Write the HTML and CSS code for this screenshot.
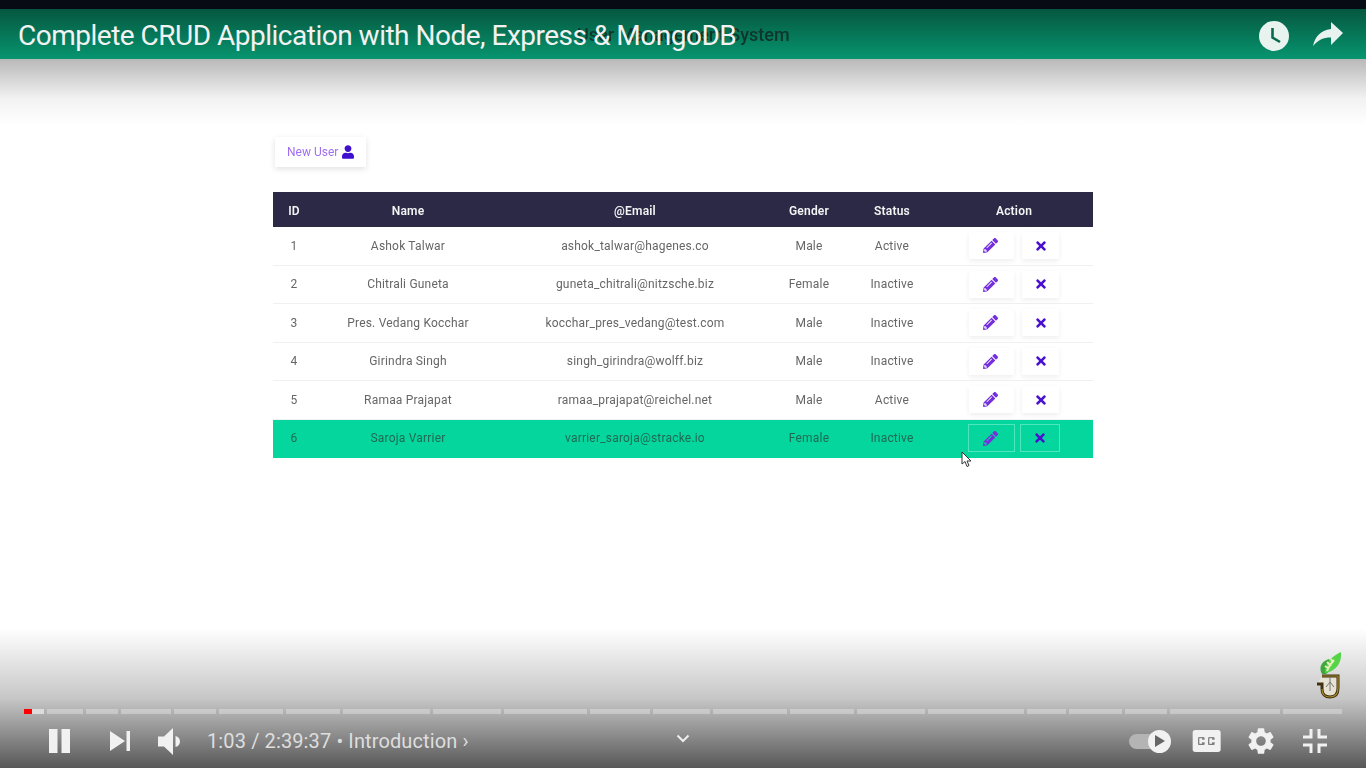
FILE: index.html
```html
<!DOCTYPE html>
<html lang="en">

<head>
  <meta charset="UTF-8">
  <meta name="viewport" content="width=device-width, initial-scale=1.0">
  <title>Complete CRUD Application with Node, Express & MongoDB</title>
  <link rel="stylesheet" href="styles.css">
</head>

<body>
  <svg class="sprites" width="0" height="0">
    <symbol id="pencil" viewBox="0 0 512 512">
      <path fill-rule="evenodd" d="M497.9 142.1l-46.1 46.1c-4.7 4.7-12.3 4.7-17 0l-111-111c-4.7-4.7-4.7-12.3 0-17l46.1-46.1c18.7-18.7 49.1-18.7 67.9 0l60.1 60.1c18.8 18.7 18.800 49.1 0 67.9zM284.2 99.8L21.6 362.4.4 483.9c-2.9 16.4 11.4 30.6 27.8 27.8l121.5-21.3 262.6-262.6c4.7-4.7 4.7-12.3 0-17l-111-111c-4.8-4.7-12.4-4.7-17.1 0zM124.1 339.9c-5.5-5.5-5.5-14.3 0-19.8l154-154c5.5-5.5 14.3-5.5 19.8 0s5.5 14.3 0 19.8l-154 154c-5.5 5.5-14.3 5.5-19.8 0zM88 424h48v36.3l-64.5 11.3-31.1-31.1L51.7 376H88v48z" />
    </symbol>
    <symbol id="times" viewBox="0 0 352 512">
      <path d="M242.72 256l100.07-100.07c12.28-12.28 12.28-32.19 0-44.48l-22.24-22.24c-12.28-12.28-32.19-12.28-44.48 0L176 189.28 75.93 89.21c-12.28-12.28-32.19-12.28-44.48 0L9.21 111.45c-12.28 12.28-12.28 32.19 0 44.48L109.28 256 9.21 356.07c-12.28 12.28-12.28 32.19 0 44.48l22.24 22.24c12.28 12.28 32.2 12.28 44.48 0L176 322.72l100.07 100.07c12.28 12.28 32.2 12.28 44.48 0l22.24-22.24c12.28-12.28 12.28-32.19 0-44.48L242.72 256z" />
    </symbol>
  </svg>

  <div class="player">
    <div class="top-strip"></div>

    <header class="title-bar">
      <span class="app-name">User Management System</span>
      <h1 class="video-title">Complete CRUD Application with Node, Express &amp; MongoDB</h1>
      <svg class="clock-icon" width="32" height="32" viewBox="0 0 32 32">
        <circle cx="16" cy="16" r="15" fill="#e8f3f0" />
        <path d="M14.5 8v9.5l7.5 4.5" fill="none" stroke="#0a6a50" stroke-width="2.6" />
      </svg>
      <svg class="share-icon" width="32" height="26" viewBox="0 0 32 26">
        <path d="M31 12L19 1v7C8 9.500 3 16 1 25c5-6 10-8.500 18-8.500V24z" fill="#e8f3f0" />
      </svg>
    </header>

    <main class="content">
      <a class="new-user">New User
        <svg width="12" height="14" viewBox="0 0 448 512">
          <path fill="#3f0fd0" d="M224 256c70.7 0 128-57.3 128-128S294.7 0 224 0 96 57.3 96 128s57.3 128 128 128zm89.6 32h-16.7c-22.2 10.2-46.9 16-72.9 16s-50.6-5.8-72.9-16h-16.7C60.2 288 0 348.2 0 422.4V464c0 26.5 21.5 48 48 48h352c26.500 0 48-21.5 48-48v-41.6c0-74.2-60.2-134.4-134.4-134.4z" />
        </svg>
      </a>

      <table class="users">
        <colgroup>
          <col class="col-id">
          <col class="col-name">
          <col class="col-email">
          <col class="col-gender">
          <col class="col-status">
          <col class="col-action">
        </colgroup>
        <thead>
          <tr>
            <th>ID</th>
            <th>Name</th>
            <th>@Email</th>
            <th>Gender</th>
            <th>Status</th>
            <th>Action</th>
          </tr>
        </thead>
        <tbody>
          <tr>
            <td>1</td>
            <td>Ashok Talwar</td>
            <td>ashok_talwar@hagenes.co</td>
            <td>Male</td>
            <td>Active</td>
            <td>
              <div class="actions">
                <a class="btn btn-edit"><svg class="ico-edit"><use href="#pencil" /></svg></a>
                <a class="btn btn-del"><svg class="ico-del"><use href="#times" /></svg></a>
              </div>
            </td>
          </tr>
          <tr>
            <td>2</td>
            <td>Chitrali Guneta</td>
            <td>guneta_chitrali@nitzsche.biz</td>
            <td>Female</td>
            <td>Inactive</td>
            <td>
              <div class="actions">
                <a class="btn btn-edit"><svg class="ico-edit"><use href="#pencil" /></svg></a>
                <a class="btn btn-del"><svg class="ico-del"><use href="#times" /></svg></a>
              </div>
            </td>
          </tr>
          <tr>
            <td>3</td>
            <td>Pres. Vedang Kocchar</td>
            <td>kocchar_pres_vedang@test.com</td>
            <td>Male</td>
            <td>Inactive</td>
            <td>
              <div class="actions">
                <a class="btn btn-edit"><svg class="ico-edit"><use href="#pencil" /></svg></a>
                <a class="btn btn-del"><svg class="ico-del"><use href="#times" /></svg></a>
              </div>
            </td>
          </tr>
          <tr>
            <td>4</td>
            <td>Girindra Singh</td>
            <td>singh_girindra@wolff.biz</td>
            <td>Male</td>
            <td>Inactive</td>
            <td>
              <div class="actions">
                <a class="btn btn-edit"><svg class="ico-edit"><use href="#pencil" /></svg></a>
                <a class="btn btn-del"><svg class="ico-del"><use href="#times" /></svg></a>
              </div>
            </td>
          </tr>
          <tr>
            <td>5</td>
            <td>Ramaa Prajapat</td>
            <td>ramaa_prajapat@reichel.net</td>
            <td>Male</td>
            <td>Active</td>
            <td>
              <div class="actions">
                <a class="btn btn-edit"><svg class="ico-edit"><use href="#pencil" /></svg></a>
                <a class="btn btn-del"><svg class="ico-del"><use href="#times" /></svg></a>
              </div>
            </td>
          </tr>
          <tr class="hovered">
            <td>6</td>
            <td>Saroja Varrier</td>
            <td>varrier_saroja@stracke.io</td>
            <td>Female</td>
            <td>Inactive</td>
            <td>
              <div class="actions">
                <a class="btn btn-edit"><svg class="ico-edit"><use href="#pencil" /></svg></a>
                <a class="btn btn-del"><svg class="ico-del"><use href="#times" /></svg></a>
              </div>
            </td>
          </tr>
        </tbody>
      </table>

      <!-- mouse pointer caught in the video -->
      <svg class="pointer" width="12" height="17" viewBox="0 0 12 17">
        <path d="M1 1v12l3-2.500 2 5 2-1-2-4.500h4z" fill="#fff" stroke="#333" stroke-width="1" />
      </svg>
    </main>

    <div class="shade-top"></div>
    <div class="shade-bottom"></div>

    <!-- channel watermark -->
    <svg class="watermark" width="28" height="48" viewBox="0 0 28 48">
      <path d="M8 22C4 15 8 9 15 7c3 4 2 12-3 15z" fill="#3fa83a" />
      <path d="M11 21C11 12 16 5 27 0c1 10-4 19-16 21z" fill="#55d448" />
      <path d="M13 19c2-5 4-8 7-11M13 10l4 4M17 7l2 4M11 14l3 2" stroke="#e9edc0" stroke-width="2" fill="none" />
      <path d="M8 24h16v12c0 6-3 9-8 9s-8-3-8-8v-5H3" fill="#e6e2d4" stroke="#40300f" stroke-width="3" />
      <path d="M8 24h16v12c0 6-3 9-8 9s-8-3-8-8" fill="none" stroke="#a88c2c" stroke-width="1.2" />
      <path d="M16 25v14M16 30l-4 5M16 30l4 5" stroke="#777" stroke-width="1" fill="none" />
    </svg>

    <footer class="controls">
      <div class="progress">
        <div class="seg seg-first"><span class="played"></span></div>
        <div class="seg" style="width:36px"></div>
        <div class="seg" style="width:32px"></div>
        <div class="seg" style="width:50px"></div>
        <div class="seg" style="width:42px"></div>
        <div class="seg" style="width:64px"></div>
        <div class="seg" style="width:54px"></div>
        <div class="seg" style="width:87px"></div>
        <div class="seg" style="width:68px"></div>
        <div class="seg" style="width:83px"></div>
        <div class="seg" style="width:60px"></div>
        <div class="seg" style="width:57px"></div>
        <div class="seg" style="width:74px"></div>
        <div class="seg" style="width:64px"></div>
        <div class="seg" style="width:68px"></div>
        <div class="seg" style="width:96px"></div>
        <div class="seg" style="width:39px"></div>
        <div class="seg" style="width:53px"></div>
        <div class="seg" style="width:42px"></div>
        <div class="seg" style="width:110px"></div>
        <div class="seg" style="width:59px"></div>
      </div>

      <div class="bar">
        <svg class="ctl-pause" width="21" height="24" viewBox="0 0 21 24">
          <path d="M0 0h8.500v24H0zM12.500 0H21v24h-8.500z" fill="#f1f1f1" />
        </svg>
        <svg class="ctl-next" width="20" height="20" viewBox="0 0 20 20">
          <path d="M0 0l15 10L0 20zM16.500 0H20v20h-3.500z" fill="#f1f1f1" />
        </svg>
        <svg class="ctl-volume" width="22" height="27" viewBox="0 0 22 27">
          <path d="M0 8.500h6l9-8.500v27l-9-8.500H0zM17.500 8c3 .8 4.500 3 4.500 5.500s-1.500 4.700-4.500 5.500z" fill="#f1f1f1" />
        </svg>
        <span class="time">1:03 / 2:39:37 • Introduction ›</span>

        <svg class="chevron" width="14" height="9" viewBox="0 0 14 9">
          <path d="M1.500 1.500L7 7l5.500-5.500" fill="none" stroke="#eee" stroke-width="2" />
        </svg>

        <div class="bar-right">
          <div class="autoplay">
            <span class="autoplay-knob">
              <svg width="10" height="12" viewBox="0 0 10 12"><path d="M0 0l10 6-10 6z" fill="#666" /></svg>
            </span>
          </div>
          <svg class="ctl-cc" width="48" height="48" viewBox="0 0 36 36">
            <path fill="#f1f1f1" fill-rule="evenodd" d="M10 9.750h17a2 2 0 0 1 2 2v12.500a2 2 0 0 1-2 2H10a2 2 0 0 1-2-2V11.750a2 2 0 0 1 2-2zM17 17h-2v-1h-2v4h2v-1h2v1c0 .55-.45 1-1 1h-3c-.55 0-1-.45-1-1v-4c0-.55.45-1 1-1h3c.55 0 1 .45 1 1zM24.500 17h-2v-1h-2v4h2v-1h2v1c0 .55-.45 1-1 1h-3c-.55 0-1-.45-1-1v-4c0-.55.45-1 1-1h3c.55 0 1 .45 1 1z" />
          </svg>
          <svg class="ctl-gear" width="32" height="32" viewBox="0 0 24 24">
            <path fill="#f1f1f1" d="M19.140 12.940c.04-.3.06-.61.06-.94 0-.32-.02-.64-.07-.94l2.030-1.580c.18-.14.23-.41.12-.61l-1.920-3.320c-.12-.22-.37-.29-.59-.22l-2.390.96c-.5-.38-1.030-.7-1.620-.94l-.36-2.540c-.04-.24-.24-.41-.48-.41h-3.840c-.24 0-.43.17-.47.41l-.36 2.540c-.59.24-1.130.57-1.620.94l-2.390-.96c-.22-.08-.47 0-.59.22L2.740 8.870c-.12.21-.08.47.12.61l2.030 1.580c-.05.3-.09.63-.09.94s.02.64.07.94l-2.030 1.580c-.18.14-.23.41-.12.61l1.920 3.320c.12.22.37.29.59.22l2.390-.96c.5.38 1.030.7 1.620.94l.36 2.540c.05.24.24.41.48.41h3.840c.24 0 .44-.17.47-.41l.36-2.540c.59-.24 1.130-.56 1.620-.94l2.390.96c.22.08.47 0 .59-.22l1.920-3.320c.12-.22.07-.47-.12-.61l-2.010-1.580zM12 15.600c-1.980 0-3.600-1.620-3.600-3.600s1.620-3.600 3.600-3.600 3.600 1.620 3.600 3.600-1.620 3.600-3.600 3.600z" />
          </svg>
          <svg class="ctl-exit" width="24" height="24" viewBox="0 0 24 24">
            <path fill="none" stroke="#f1f1f1" stroke-width="3" d="M8 0v8H0M16 0v8h8M0 16h8v8M24 16h-8v8" />
          </svg>
        </div>
      </div>
    </footer>
  </div>
</body>

</html>
```

FILE: styles.css
```css
body {
  margin: 0;
  background-color: #fff;
  font-family: Roboto, "Liberation Sans", sans-serif;
}

.sprites {
  position: absolute;
}

.player {
  position: relative;
  display: flex;
  flex-direction: column;
  width: 1366px;
  height: 768px;
  overflow: hidden;
  background-color: #fff;
}

.top-strip {
  height: 9px;
  background-color: #070b14;
}

/* title bar */
.title-bar {
  position: relative;
  display: flex;
  align-items: center;
  height: 50px;
  padding: 0 22px 0 18px;
  background: linear-gradient(#05573f, #07956f);
  box-sizing: border-box;
}

.app-name {
  position: absolute;
  top: 15px;
  left: 577px;
  width: 213px;
  font-size: 18px;
  font-weight: 500;
  line-height: 22px;
  white-space: nowrap;
  color: #10352a;
  filter: blur(0.5px);
}

.video-title {
  position: relative;
  flex: 1;
  margin: 0;
  padding-top: 3px;
  font-size: 28px;
  font-weight: 400;
  letter-spacing: -0.5px;
  line-height: 47px;
  color: #f2f2f2;
  white-space: nowrap;
}

.clock-icon {
  margin: 4px 22px 0 0;
}

/* video frame */
.content {
  position: relative;
  flex: 1;
  padding: 78px 273px 0;
  filter: blur(0.4px);
}

.new-user {
  display: flex;
  align-items: center;
  gap: 4px;
  box-sizing: border-box;
  width: 91px;
  height: 30px;
  margin-left: 2px;
  padding-left: 12px;
  font-size: 12px;
  color: #a070f0;
  background-color: #fff;
  box-shadow: 0 2px 6px rgba(0, 0, 0, 0.12);
}

.users {
  width: 820px;
  margin-top: 25px;
  table-layout: fixed;
  border-collapse: collapse;
  font-size: 12px;
  letter-spacing: 0.2px;
  color: #666;
  text-align: center;
}

.col-id { width: 42px; }
.col-name { width: 186px; }
.col-email { width: 268px; }
.col-gender { width: 80px; }
.col-status { width: 86px; }
.col-action { width: 158px; }

.users th {
  height: 33px;
  padding: 2px 0 0;
  font-weight: 600;
  color: #f4f4f4;
  background-color: #2b2945;
}

.users td {
  height: 37.5px;
  padding: 0;
  border-bottom: 1px solid #f0f0f0;
}

.users .hovered td {
  height: 37.5px;
  padding-bottom: 1px;
  color: #1f6a52;
  background-color: #05d69e;
  border-bottom: 0;
}

.actions {
  display: flex;
  justify-content: center;
  gap: 8px;
}

.hovered .actions {
  gap: 5px;
}

.btn {
  display: flex;
  align-items: center;
  justify-content: center;
  height: 27px;
  background-color: #fff;
  box-shadow: 0 2px 5px rgba(0, 0, 0, 0.07);
  box-sizing: border-box;
}

.btn-edit { width: 45px; padding-right: 3px; }
.btn-del { width: 37px; }

.ico-edit {
  width: 15px;
  height: 15px;
  fill: #7430dc;
}

.ico-del {
  width: 10px;
  height: 14px;
  fill: #4a10d0;
}

.hovered .btn {
  height: 28px;
  background-color: transparent;
  border: 1.5px solid #4fe6bd;
  box-shadow: none;
}

.hovered .btn-edit { width: 47px; }
.hovered .btn-del { width: 40px; }

.pointer {
  position: absolute;
  top: 392px;
  left: 961px;
}

/* player overlays */
.shade-top {
  position: absolute;
  top: 59px;
  left: 0;
  right: 0;
  height: 66px;
  background: linear-gradient(rgba(0, 0, 0, 0.28), rgba(0, 0, 0, 0.05) 60%, rgba(0, 0, 0, 0));
  pointer-events: none;
}

.shade-bottom {
  position: absolute;
  bottom: 0;
  left: 0;
  right: 0;
  height: 140px;
  background: linear-gradient(rgba(0, 0, 0, 0), rgba(0, 0, 0, 0.22) 50%, rgba(0, 0, 0, 0.66));
  pointer-events: none;
}

.watermark {
  position: absolute;
  top: 652px;
  left: 1314px;
  filter: blur(0.5px);
}

.controls {
  position: relative;
  padding: 0 24px;
}

.progress {
  display: flex;
  gap: 3px;
}

.seg {
  height: 5px;
  background-color: rgba(255, 255, 255, 0.3);
}

.seg-first {
  width: 20px;
  background-color: #dcdcdc;
}

.played {
  display: block;
  width: 8px;
  height: 5px;
  background-color: #f00;
}

.bar {
  position: relative;
  display: flex;
  align-items: center;
  height: 54px;
}

.ctl-pause { margin-left: 25px; }
.ctl-next { margin-left: 40px; }
.ctl-volume { margin-left: 28px; }

.time {
  margin-left: 27px;
  font-size: 20px;
  letter-spacing: 0.12px;
  color: #dedede;
  white-space: nowrap;
}

.chevron {
  position: absolute;
  top: 20px;
  left: 652px;
}

.bar-right {
  display: flex;
  align-items: center;
  margin-left: auto;
  margin-right: 15px;
}

.autoplay {
  position: relative;
  width: 36px;
  height: 15px;
  border-radius: 8px;
  background-color: #b4b4b4;
}

.autoplay-knob {
  position: absolute;
  top: -4px;
  right: -6px;
  display: flex;
  align-items: center;
  justify-content: center;
  width: 23px;
  height: 23px;
  border-radius: 50%;
  background-color: #f1f1f1;
}

.ctl-cc { margin-left: 17px; }
.ctl-gear { margin-left: 15px; }
.ctl-exit { margin-left: 26px; }
```
